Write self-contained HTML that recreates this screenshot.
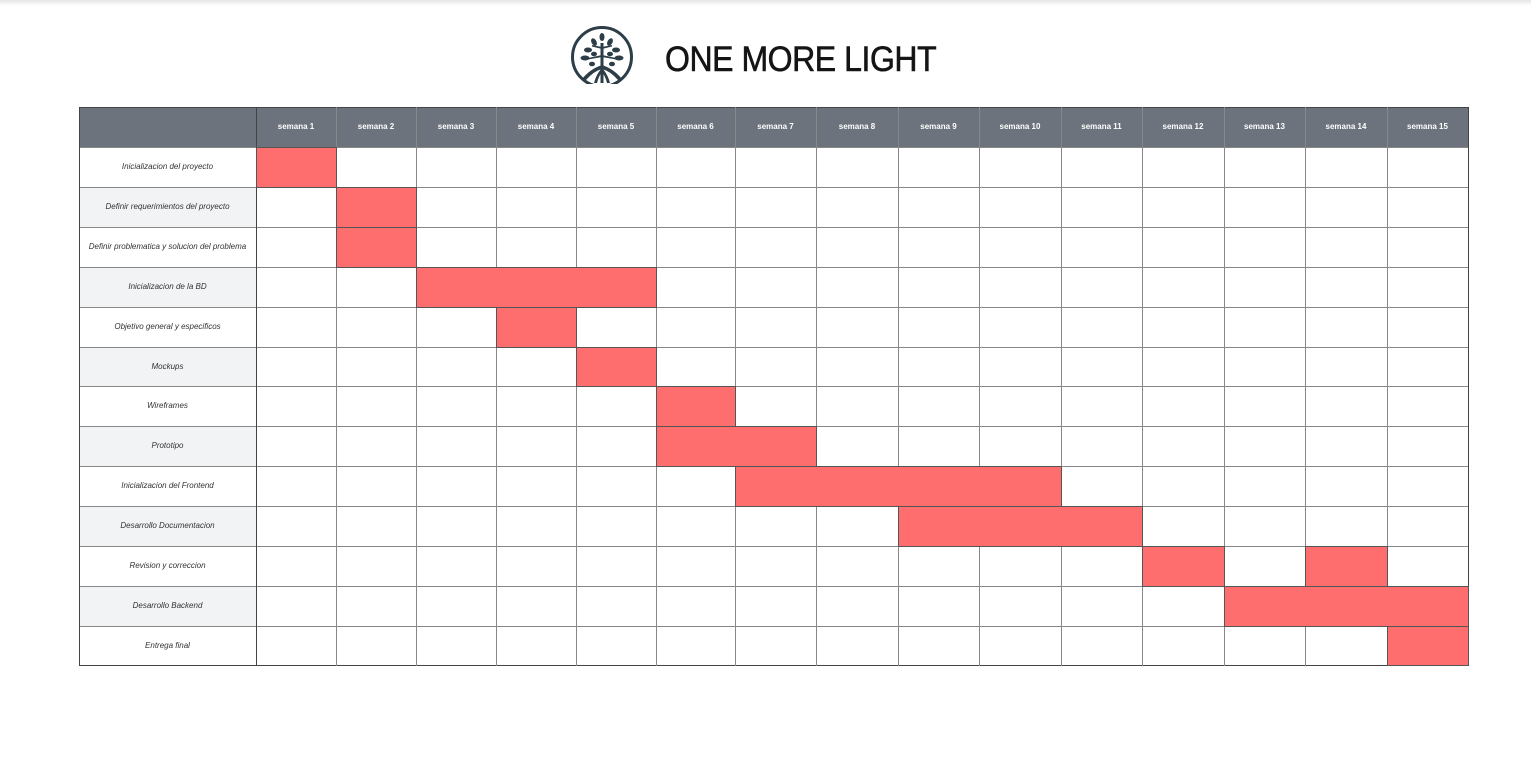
<!DOCTYPE html>
<html><head><meta charset="utf-8"><style>
*{margin:0;padding:0;box-sizing:border-box}
body{width:1531px;height:784px;background:#fff;position:relative;overflow:hidden;font-family:"Liberation Sans",Arial,sans-serif}
.top{position:absolute;left:0;top:0;width:1531px;height:6px;background:linear-gradient(#e6e6e6,#fff)}
.hdr{position:absolute;left:79px;top:107px;width:1390px;height:40px;background:#6c737c}
.alt{position:absolute;left:79px;width:177px;height:40px;background:#f2f3f5}
.v{position:absolute;top:107px;width:1px;height:559px;background:#888}
.h{position:absolute;left:79px;width:1390px;height:1px;background:#888}
.th{position:absolute;top:107px;height:40px;line-height:40px;text-align:center;color:#fff;font-size:8px;font-weight:bold}
.lb{position:absolute;left:79px;width:177px;height:40px;line-height:40px;text-align:center;font-size:8px;font-style:italic;color:#333}
.bar{position:absolute;background:#ff6e6e;border:1px solid #555}
.ttl{position:absolute;left:665px;top:40px;font-size:35px;color:#151515;letter-spacing:-0.5px;transform:scaleX(0.915);transform-origin:left top;white-space:nowrap;-webkit-text-stroke:0.6px #151515}
</style></head><body>
<div class="top"></div>
<svg style="position:absolute;left:568px;top:25px" width="68" height="59" viewBox="0 0 68 59">
<circle cx="34" cy="32" r="29.5" fill="none" stroke="#2d3e48" stroke-width="3"/>
<g fill="#2d3e48">
<rect x="32.5" y="18" width="3" height="40"/>
<path d="M34 40 Q22 44 14 54 L18 55 Q26 46 34 44Z M34 40 Q46 44 54 54 L50 55 Q42 46 34 44Z M33 44 Q28 50 26 58 L29 58 Q31 50 35 46Z M35 44 Q40 50 42 58 L39 58 Q37 50 33 46Z"/>
<ellipse cx="34" cy="12" rx="2.5" ry="4"/>
<ellipse cx="26" cy="17" rx="2.5" ry="4" transform="rotate(-30 26 17)"/>
<ellipse cx="42" cy="17" rx="2.5" ry="4" transform="rotate(30 42 17)"/>
<ellipse cx="20" cy="25" rx="4" ry="2.5"/>
<ellipse cx="48" cy="25" rx="4" ry="2.5"/>
<ellipse cx="17" cy="33" rx="4.5" ry="2.5"/>
<ellipse cx="51" cy="33" rx="4.5" ry="2.5"/>
<ellipse cx="26" cy="29" rx="3" ry="2.3"/>
<ellipse cx="42" cy="29" rx="3" ry="2.3"/>
<ellipse cx="24" cy="39" rx="3" ry="2.3"/>
<ellipse cx="44" cy="39" rx="3" ry="2.3"/>
<path d="M34 22 L24 20 L24 21.5 L34 24Z M34 22 L44 20 L44 21.5 L34 24Z M34 30 L20 33 L20 34.5 L34 32Z M34 30 L48 33 L48 34.5 L34 32Z"/>
</g>
</svg>
<div class="ttl">ONE MORE LIGHT</div>

<div class="hdr"></div>
<div class="alt" style="top:187px"></div>
<div class="alt" style="top:267px"></div>
<div class="alt" style="top:347px"></div>
<div class="alt" style="top:426px"></div>
<div class="alt" style="top:506px"></div>
<div class="alt" style="top:586px"></div>

<div class="th" style="left:256px;width:80px">semana 1</div>
<div class="th" style="left:336px;width:80px">semana 2</div>
<div class="th" style="left:416px;width:80px">semana 3</div>
<div class="th" style="left:496px;width:80px">semana 4</div>
<div class="th" style="left:576px;width:80px">semana 5</div>
<div class="th" style="left:656px;width:79px">semana 6</div>
<div class="th" style="left:735px;width:81px">semana 7</div>
<div class="th" style="left:816px;width:82px">semana 8</div>
<div class="th" style="left:898px;width:81px">semana 9</div>
<div class="th" style="left:979px;width:82px">semana 10</div>
<div class="th" style="left:1061px;width:81px">semana 11</div>
<div class="th" style="left:1142px;width:82px">semana 12</div>
<div class="th" style="left:1224px;width:81px">semana 13</div>
<div class="th" style="left:1305px;width:82px">semana 14</div>
<div class="th" style="left:1387px;width:81px">semana 15</div>

<div class="lb" style="top:147px">Inicializacion del proyecto</div>
<div class="lb" style="top:187px">Definir requerimientos del proyecto</div>
<div class="lb" style="top:227px">Definir problematica y solucion del problema</div>
<div class="lb" style="top:267px">Inicializacion de la BD</div>
<div class="lb" style="top:307px">Objetivo general y especificos</div>
<div class="lb" style="top:347px">Mockups</div>
<div class="lb" style="top:386px">Wireframes</div>
<div class="lb" style="top:426px">Prototipo</div>
<div class="lb" style="top:466px">Inicializacion del Frontend</div>
<div class="lb" style="top:506px">Desarrollo Documentacion</div>
<div class="lb" style="top:546px">Revision y correccion</div>
<div class="lb" style="top:586px">Desarrollo Backend</div>
<div class="lb" style="top:626px">Entrega final</div>

<div class="h" style="top:107px;background:#444"></div>
<div class="h" style="top:147px"></div><div class="h" style="top:187px"></div><div class="h" style="top:227px"></div>
<div class="h" style="top:267px"></div><div class="h" style="top:307px"></div><div class="h" style="top:347px"></div>
<div class="h" style="top:386px"></div><div class="h" style="top:426px"></div><div class="h" style="top:466px"></div>
<div class="h" style="top:506px"></div><div class="h" style="top:546px"></div><div class="h" style="top:586px"></div>
<div class="h" style="top:626px"></div><div class="h" style="top:665px;background:#444"></div>

<div class="v" style="left:79px;background:#444"></div><div class="v" style="left:256px;background:#444"></div>
<div class="v" style="left:336px"></div><div class="v" style="left:416px"></div><div class="v" style="left:496px"></div>
<div class="v" style="left:576px"></div><div class="v" style="left:656px"></div><div class="v" style="left:735px"></div>
<div class="v" style="left:816px"></div><div class="v" style="left:898px"></div><div class="v" style="left:979px"></div>
<div class="v" style="left:1061px"></div><div class="v" style="left:1142px"></div><div class="v" style="left:1224px"></div>
<div class="v" style="left:1305px"></div><div class="v" style="left:1387px"></div><div class="v" style="left:1468px;background:#444"></div>

<div class="bar" style="left:256px;top:147px;width:81px;height:41px"></div>
<div class="bar" style="left:336px;top:187px;width:81px;height:41px"></div>
<div class="bar" style="left:336px;top:227px;width:81px;height:41px"></div>
<div class="bar" style="left:416px;top:267px;width:241px;height:41px"></div>
<div class="bar" style="left:496px;top:307px;width:81px;height:41px"></div>
<div class="bar" style="left:576px;top:347px;width:81px;height:40px"></div>
<div class="bar" style="left:656px;top:386px;width:80px;height:41px"></div>
<div class="bar" style="left:656px;top:426px;width:161px;height:41px"></div>
<div class="bar" style="left:735px;top:466px;width:327px;height:41px"></div>
<div class="bar" style="left:898px;top:506px;width:245px;height:41px"></div>
<div class="bar" style="left:1142px;top:546px;width:83px;height:41px"></div>
<div class="bar" style="left:1305px;top:546px;width:83px;height:41px"></div>
<div class="bar" style="left:1224px;top:586px;width:245px;height:41px"></div>
<div class="bar" style="left:1387px;top:626px;width:82px;height:40px"></div>
</body></html>
